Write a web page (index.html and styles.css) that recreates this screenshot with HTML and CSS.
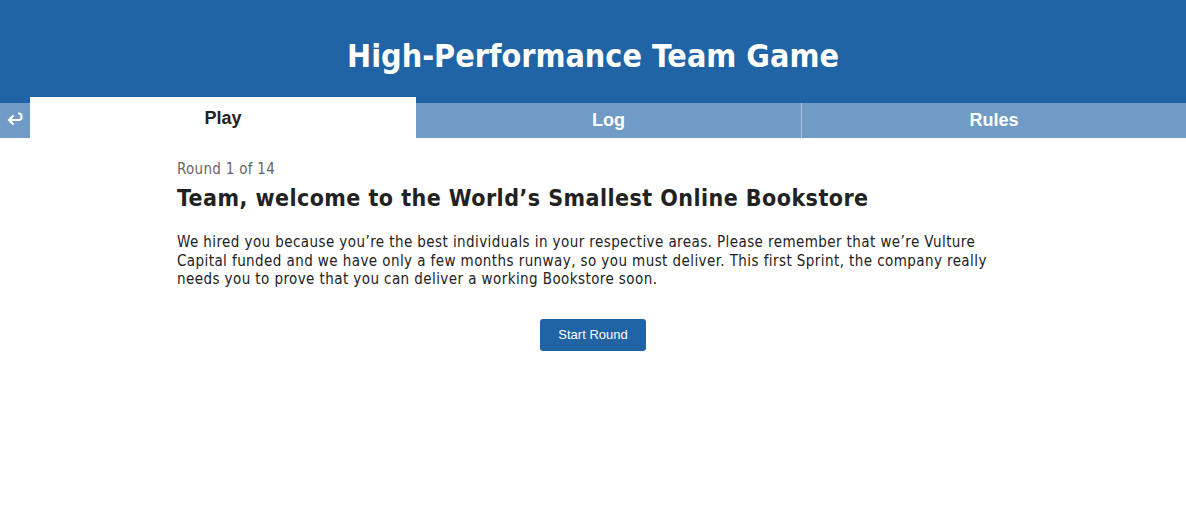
FILE: index.html
```html
<!DOCTYPE html>
<html>
<head>
<meta charset="utf-8">
<link rel="stylesheet" href="styles.css">
</head>
<body>
<header class="masthead">
  <h1 class="title">High-Performance Team Game</h1>
</header>
<nav class="tabs">
  <a class="tab-back" href="#"><svg width="18" height="16" viewBox="0 0 18 16"><path d="M12 2.5h1a2.5 2.5 0 0 1 2.5 2.5v1.5a2.5 2.5 0 0 1-2.5 2.5H4" fill="none" stroke="#fff" stroke-width="2.2"/><path d="M7.5 4.5L3 9l4.5 4.5" fill="none" stroke="#fff" stroke-width="2.2"/></svg></a>
  <a class="tab tab-active" href="#">Play</a>
  <a class="tab" href="#">Log</a>
  <a class="tab tab-last" href="#">Rules</a>
</nav>
<main class="content">
  <div class="round">Round 1 of 14</div>
  <h2 class="heading">Team, welcome to the World’s Smallest Online Bookstore</h2>
  <p class="intro">We hired you because you’re the best individuals in your respective areas. Please remember that we’re Vulture Capital funded and we have only a few months runway, so you must deliver. This first Sprint, the company really needs you to prove that you can deliver a working Bookstore soon.</p>
  <div class="actions"><button class="btn">Start Round</button></div>
</main>
</body>
</html>
```
FILE: styles.css
```css
body {
  margin: 0;
  background: #fff;
  font-family: "DejaVu Sans Condensed", "DejaVu Sans", sans-serif;
  color: #222;
}
.masthead {
  background: #2064a6;
  height: 103px;
  display: flex;
  justify-content: center;
  align-items: flex-start;
}
.title {
  margin: 36px 0 0;
  font-size: 32px;
  line-height: 40px;
  font-weight: bold;
  color: #fff;
}
.tabs {
  display: grid;
  grid-template-columns: 30px 386px 386px 1fr;
  height: 35px;
  background: #6f9bc6;
}
.tab-back {
  display: flex;
  align-items: center;
  justify-content: center;
  padding-bottom: 4px;
}
.tab {
  display: flex;
  align-items: center;
  justify-content: center;
  font-family: "Liberation Sans", Arial, sans-serif;
  font-weight: bold;
  font-size: 18px;
  color: #fff;
  text-decoration: none;
  border-right: 1px solid #a9c3dd;
}
.tab-last { border-right: none; }
.tab-active {
  background: #fff;
  color: #222;
  margin-top: -6px;
  padding-top: 1px;
  border-right: none;
}
.content {
  width: 832px;
  margin: 0 auto;
  padding-top: 21px;
}
.round {
  font-size: 15px;
  line-height: 20px;
  color: #666;
  letter-spacing: 0.3px;
}
.heading {
  margin: 5px 0 0;
  font-size: 23px;
  line-height: 28px;
  font-weight: bold;
  color: #222;
  letter-spacing: 0.45px;
}
.intro {
  margin: 21px 0 0;
  width: 820px;
  font-size: 15px;
  line-height: 18.5px;
  letter-spacing: 0.42px;
}
.actions {
  display: flex;
  justify-content: center;
  margin-top: 30px;
}
.btn {
  background: #2064a6;
  color: #fff;
  border: none;
  border-radius: 3px;
  font-family: "Liberation Sans", Arial, sans-serif;
  font-size: 13px;
  width: 106px;
  height: 32px;
  padding: 0;
}
```
